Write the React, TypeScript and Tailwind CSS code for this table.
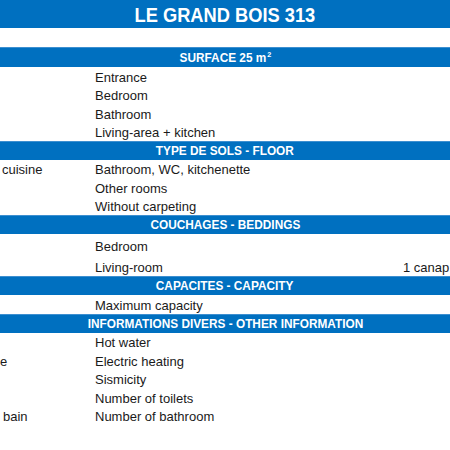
import { ReactNode } from "react";

const narrow = { fontFamily: '"Liberation Sans Narrow", "Arial Narrow", "Liberation Sans", sans-serif' };

function Bar({ children, h = "h-[19px]" }: { children: ReactNode; h?: string }) {
  return (
    <div
      style={narrow}
      className={`${h} bg-[#0070c0] border-t border-[#3d8fd0] flex items-center justify-center text-white font-bold text-[13px] whitespace-nowrap`}
    >
      <span className="inline-block scale-x-[0.91]">{children}</span>
    </div>
  );
}

function Row({
  left,
  mid,
  right,
  h = "h-[18.5px]",
  pl = "pl-0",
}: {
  left?: string;
  mid?: string;
  right?: string;
  h?: string;
  pl?: string;
}) {
  return (
    <div className={`${h} grid grid-cols-[95px_308px_1fr] items-end text-[13px] leading-[15px] text-[#1a1a1a]`}>
      <div className={`${pl} whitespace-nowrap pb-[1px]`}>{left}</div>
      <div className="whitespace-nowrap pb-[1px]">{mid}</div>
      <div className="whitespace-nowrap pb-[1px] overflow-hidden">{right}</div>
    </div>
  );
}

export default function App() {
  return (
    <div
      className="w-[450px] h-[450px] overflow-hidden bg-white flex flex-col"
      style={{ fontFamily: '"Liberation Sans", Arial, sans-serif' }}
    >
      <div
        style={narrow}
        className="h-[28px] bg-[#0070c0] flex items-center justify-center text-white font-bold text-[21px] pt-[1px]"
      >
        <span className="inline-block scale-x-[0.87]">LE GRAND BOIS 313</span>
      </div>
      <div className="h-[19px]" />
      <Bar h="h-[20px]">
        SURFACE 25 m<sup className="text-[8px] -top-[5px] ml-[1px]">2</sup>
      </Bar>
      <Row mid="Entrance" />
      <Row mid="Bedroom" />
      <Row mid="Bathroom" />
      <Row mid="Living-area + kitchen" />
      <Bar>TYPE DE SOLS - FLOOR</Bar>
      <Row left="cuisine" pl="pl-[2px]" mid="Bathroom, WC, kitchenette" h="h-[18.3px]" />
      <Row mid="Other rooms" h="h-[18.3px]" />
      <Row mid="Without carpeting" h="h-[18.4px]" />
      <Bar>COUCHAGES - BEDDINGS</Bar>
      <Row mid="Bedroom" h="h-[21px]" />
      <Row mid="Living-room" right="1 canap" h="h-[21px]" />
      <Bar>CAPACITES - CAPACITY</Bar>
      <Row mid="Maximum capacity" h="h-[19px]" />
      <Bar>INFORMATIONS DIVERS - OTHER INFORMATION</Bar>
      <Row mid="Hot water" />
      <Row left="e" mid="Electric heating" />
      <Row mid="Sismicity" />
      <Row mid="Number of toilets" />
      <Row left="bain" pl="pl-[3px]" mid="Number of bathroom" />
    </div>
  );
}
